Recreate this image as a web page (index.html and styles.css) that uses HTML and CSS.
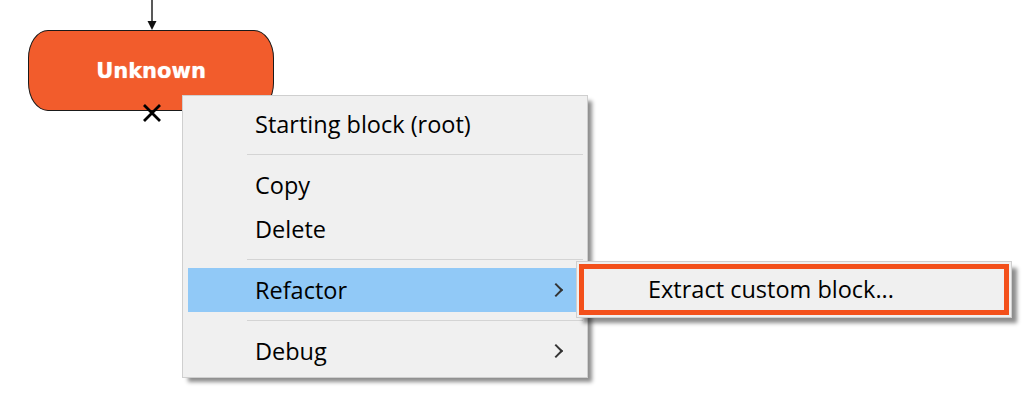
FILE: index.html
```html
<!DOCTYPE html>
<html lang="en">
<head>
<meta charset="utf-8">
<title>Context menu</title>
<link rel="stylesheet" href="styles.css">
</head>
<body>
<div class="canvas">
  <svg class="connector" width="20" height="32" viewBox="0 0 20 32">
    <line x1="10" y1="0" x2="10" y2="22" stroke="#222" stroke-width="1.5"/>
    <path d="M5.5 21 L14.5 21 L10 30 Z" fill="#111"/>
  </svg>
  <div class="block"><span class="block-label">Unknown</span></div>
  <svg class="cross" width="20" height="20" viewBox="0 0 20 20">
    <path d="M2 2 L18 18 M18 2 L2 18" stroke="#000" stroke-width="2.8" fill="none"/>
  </svg>

  <div class="menu">
    <div class="item">Starting block (root)</div>
    <div class="sep"></div>
    <div class="item">Copy</div>
    <div class="item">Delete</div>
    <div class="sep"></div>
    <div class="item item-active">Refactor<span class="chev"></span></div>
    <div class="sep"></div>
    <div class="item">Debug<span class="chev"></span></div>
  </div>

  <div class="submenu">
    <div class="sub-item">Extract custom block...</div>
  </div>
</div>
</body>
</html>
```

FILE: styles.css
```css
html, body {
  margin: 0;
  padding: 0;
  background: #ffffff;
}

.canvas {
  position: relative;
  width: 1024px;
  height: 408px;
  overflow: hidden;
  font-family: "Open Sans", "Noto Sans", sans-serif;
}

.connector {
  position: absolute;
  left: 142px;
  top: 0;
}

.block {
  position: absolute;
  left: 28px;
  top: 30px;
  width: 244px;
  height: 79px;
  border: 1px solid #1a1a1a;
  border-radius: 20px / 28px;
  background: #f25c2c;
  display: flex;
  align-items: center;
  justify-content: center;
}

.block-label {
  font-family: "DejaVu Sans", "Verdana", sans-serif;
  font-weight: bold;
  font-size: 21px;
  color: #ffffff;
  text-shadow: 0 0 1px #ffd9c8;
  margin-top: 1px;
}

.cross {
  position: absolute;
  left: 142px;
  top: 103px;
}

.menu {
  position: absolute;
  left: 182px;
  top: 95px;
  width: 404px;
  border: 1px solid #cfcfcf;
  background: #f0f0f0;
  padding: 6px 0 4px;
  box-shadow: 5px 5px 4px -1px rgba(0, 0, 0, 0.45);
}

.item {
  position: relative;
  height: 44px;
  line-height: 44px;
  margin: 0 5px 0 5px;
  padding-left: 67px;
  font-size: 23.5px;
  color: #000;
  white-space: nowrap;
}

.item-active {
  background: #91c9f7;
}

.chev {
  position: absolute;
  right: 21px;
  top: 17px;
  width: 8px;
  height: 8px;
  border-right: 2px solid #333;
  border-top: 2px solid #333;
  transform: rotate(45deg);
}

.sep {
  height: 1px;
  background: #d4d4d4;
  margin: 8px 4px 8px 64px;
}

.submenu {
  position: absolute;
  left: 576px;
  top: 261px;
  width: 430px;
  border: 1px solid #cfcfcf;
  background: #f0f0f0;
  padding: 2px;
  box-shadow: 6px 6px 4px -1px rgba(0, 0, 0, 0.45);
}

.sub-item {
  height: 41px;
  line-height: 41px;
  border: 5px solid #f3501b;
  padding-left: 64px;
  font-size: 23.5px;
  color: #000;
  white-space: nowrap;
}
```
